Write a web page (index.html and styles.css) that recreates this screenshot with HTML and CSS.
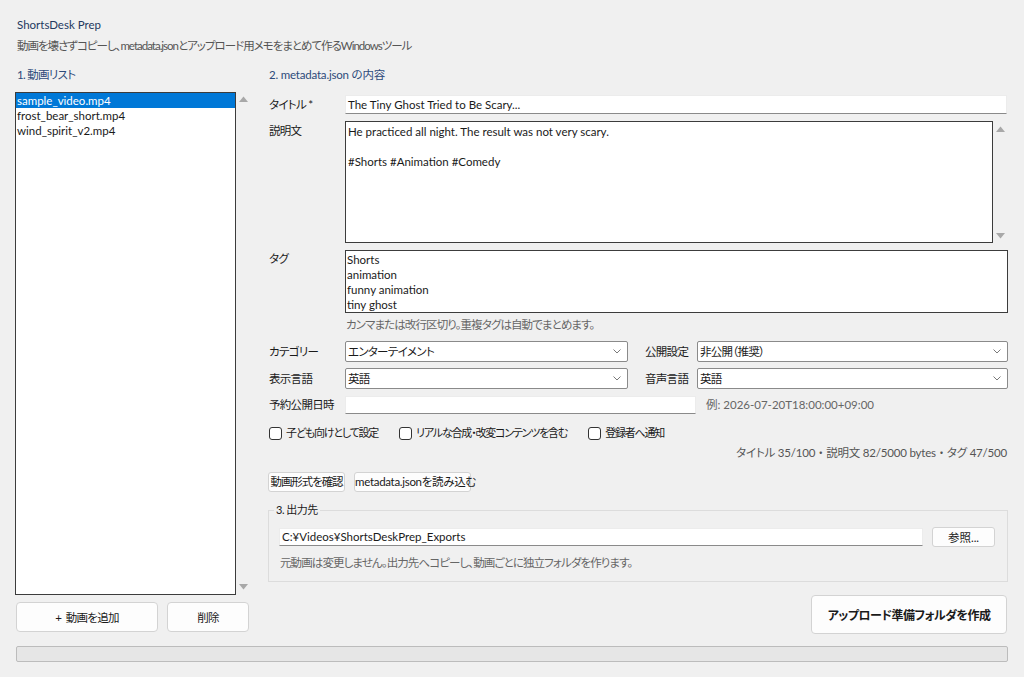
FILE: index.html
```html
<!DOCTYPE html>
<html lang="ja">
<head>
<meta charset="utf-8">
<title>ShortsDesk Prep</title>
<link rel="stylesheet" href="styles.css">
</head>
<body>
<div class="app">
  <header class="head">
    <div class="app-title">ShortsDesk Prep</div>
    <div class="app-sub jp">動画を壊さずコピーし、metadata.jsonとアップロード用メモをまとめて作るWindowsツール</div>
  </header>

  <main class="main">
    <section class="left">
      <h2 class="sec jp">1. 動画リスト</h2>
      <div class="listwrap">
        <ul class="list">
          <li class="sel">sample_video.mp4</li>
          <li>frost_bear_short.mp4</li>
          <li>wind_spirit_v2.mp4</li>
        </ul>
        <div class="vscroll">
          <svg class="arrow" width="9" height="6" viewBox="0 0 9 6"><path d="M0 6 L4.5 0.5 L9 6 Z" fill="#a8a8a8"/></svg>
          <svg class="arrow" width="9" height="6" viewBox="0 0 9 6"><path d="M0 0 L4.5 5.5 L9 0 Z" fill="#a8a8a8"/></svg>
        </div>
      </div>
      <div class="left-btns">
        <button class="btn btn-add">+&nbsp; 動画を追加</button>
        <button class="btn btn-del">削除</button>
      </div>
    </section>

    <section class="right">
      <h2 class="sec sec-meta">2. metadata.json の内容</h2>

      <div class="row row-title">
        <span class="lbl jp">タイトル *</span>
        <div class="entry entry-full">The Tiny Ghost Tried to Be Scary...</div>
      </div>

      <div class="row row-desc">
        <span class="lbl lbl-top jp">説明文</span>
        <div class="textbox desc">He practiced all night. The result was not very scary.

#Shorts #Animation #Comedy</div>
        <div class="vscroll vscroll-desc">
          <svg class="arrow" width="9" height="6" viewBox="0 0 9 6"><path d="M0 6 L4.5 0.5 L9 6 Z" fill="#a8a8a8"/></svg>
          <svg class="arrow" width="9" height="6" viewBox="0 0 9 6"><path d="M0 0 L4.5 5.5 L9 0 Z" fill="#a8a8a8"/></svg>
        </div>
      </div>

      <div class="row row-tags">
        <span class="lbl lbl-tags jp">タグ</span>
        <div class="textbox tags">Shorts
animation
funny animation
tiny ghost</div>
      </div>

      <div class="hint hint-tags jp">カンマまたは改行区切り。重複タグは自動でまとめます。</div>

      <div class="row row-combo jp">
        <span class="lbl">カテゴリー</span>
        <div class="combo combo-left"><span>エンターテイメント</span><svg class="chev" width="8" height="5" viewBox="0 0 8 5"><path d="M0.5 0.5 L4 4 L7.5 0.5" fill="none" stroke="#7a7a7a" stroke-width="1"/></svg></div>
        <span class="lbl2">公開設定</span>
        <div class="combo combo-right"><span>非公開（推奨）</span><svg class="chev" width="8" height="5" viewBox="0 0 8 5"><path d="M0.5 0.5 L4 4 L7.5 0.5" fill="none" stroke="#7a7a7a" stroke-width="1"/></svg></div>
      </div>

      <div class="row row-combo row-combo2 jp">
        <span class="lbl">表示言語</span>
        <div class="combo combo-left"><span>英語</span><svg class="chev" width="8" height="5" viewBox="0 0 8 5"><path d="M0.5 0.5 L4 4 L7.5 0.5" fill="none" stroke="#7a7a7a" stroke-width="1"/></svg></div>
        <span class="lbl2">音声言語</span>
        <div class="combo combo-right"><span>英語</span><svg class="chev" width="8" height="5" viewBox="0 0 8 5"><path d="M0.5 0.5 L4 4 L7.5 0.5" fill="none" stroke="#7a7a7a" stroke-width="1"/></svg></div>
      </div>

      <div class="row row-sched">
        <span class="lbl jp">予約公開日時</span>
        <div class="entry entry-sched"></div>
        <span class="hint hint-sched">例: 2026-07-20T18:00:00+09:00</span>
      </div>

      <div class="row row-checks">
        <label class="check"><span class="box"></span>子ども向けとして設定</label>
        <label class="check"><span class="box"></span>リアルな合成・改変コンテンツを含む</label>
        <label class="check"><span class="box"></span>登録者へ通知</label>
      </div>

      <div class="counts">タイトル 35/100 ・ 説明文 82/5000 bytes ・ タグ 47/500</div>

      <div class="row row-btns">
        <button class="btn btn-sm btn-check">動画形式を確認</button>
        <button class="btn btn-sm btn-load">metadata.jsonを読み込む</button>
      </div>

      <fieldset class="frame">
        <legend class="frame-label">3. 出力先</legend>
        <div class="row row-path">
          <div class="entry entry-path">C:¥Videos¥ShortsDeskPrep_Exports</div>
          <button class="btn btn-browse">参照...</button>
        </div>
        <div class="hint hint-path jp">元動画は変更しません。出力先へコピーし、動画ごとに独立フォルダを作ります。</div>
      </fieldset>

      <button class="btn btn-big">アップロード準備フォルダを作成</button>
    </section>
  </main>

  <div class="progress"></div>
</div>
</body>
</html>
```

FILE: styles.css
```css
* { box-sizing: border-box; }

html, body {
  margin: 0;
  padding: 0;
  background: #f0f0f0;
}

body {
  font-family: "Lato", "Noto Sans CJK JP", sans-serif;
  font-size: 11.5px;
  font-feature-settings: "palt" 1;
  color: #1a1a1a;
  width: 1024px;
  height: 677px;
  overflow: hidden;
}

/* text that is mostly Japanese */
.jp {
  font-size: 11.5px;
  letter-spacing: -0.7px;
}

.app {
  padding: 17px 16px 0 15px;
}

.head {
  padding-left: 2px;
}

.app-title {
  line-height: 16px;
  color: #23395f;
}

.app-sub {
  margin-top: 5px;
  line-height: 16px;
  color: #555555;
  letter-spacing: -1px;
}

.main {
  margin-top: 13px;
  display: grid;
  grid-template-columns: 236px 740px;
  column-gap: 17px;
}

.sec {
  margin: 0;
  font-size: 11.5px;
  font-weight: normal;
  line-height: 16px;
  color: #2d4a7a;
  padding-left: 2px;
}

.sec-meta { padding-left: 1px; letter-spacing: -0.2px; }

/* left column */
.left {
  display: flex;
  flex-direction: column;
}

.listwrap {
  margin-top: 9px;
  height: 503px;
  display: flex;
}

.list {
  list-style: none;
  margin: 0;
  padding: 0;
  width: 221px;
  height: 100%;
  background: #ffffff;
  border: 1px solid #3c3c3c;
}

.list li {
  line-height: 15px;
  height: 15px;
  padding-left: 1px;
  white-space: nowrap;
}

.list li.sel {
  background: #0078d7;
  color: #ffffff;
}

.vscroll {
  width: 15px;
  display: flex;
  flex-direction: column;
  justify-content: space-between;
  align-items: center;
  padding: 4px 0 5px;
}

.arrow { display: block; }

.left-btns {
  margin-top: 7px;
  display: flex;
  gap: 9px;
  padding-left: 1px;
}

.btn {
  font-family: "Lato", "Noto Sans CJK JP", sans-serif;
  font-size: 11.5px;
  letter-spacing: -0.7px;
  font-feature-settings: "palt" 1;
  color: #1a1a1a;
  background: #fdfdfd;
  border: 1px solid #d3d3d3;
  border-radius: 4px;
  padding: 0;
  margin: 0;
  cursor: default;
  white-space: nowrap;
}

.btn-add { width: 142px; height: 30px; }
.btn-del { width: 82px; height: 30px; }

/* right column */
.right {
  display: flex;
  flex-direction: column;
}

.row {
  display: flex;
  align-items: center;
}

.lbl {
  width: 77px;
  flex: none;
  padding-left: 1px;
  line-height: 16px;
}

.lbl-top { align-self: flex-start; padding-top: 2px; }
.lbl-tags { align-self: flex-start; padding-top: 1px; }

.entry {
  height: 19px;
  background: #ffffff;
  border: 1px solid #ececec;
  border-bottom-color: #8a8a8a;
  padding: 0 2px;
  line-height: 17px;
  white-space: nowrap;
}

.row-title { margin-top: 12px; }
.entry-full { flex: 1; margin-right: 1px; }

.row-desc { margin-top: 7px; align-items: flex-start; }

.textbox {
  background: #ffffff;
  border: 1px solid #3c3c3c;
  white-space: pre-line;
  line-height: 15px;
}

.desc {
  width: 648px;
  height: 122px;
  padding: 2px 2px;
}

.vscroll-desc {
  height: 122px;
  padding: 5px 0 4px;
}

.row-tags { margin-top: 7px; align-items: flex-start; }

.tags {
  flex: 1;
  height: 63px;
  padding: 1px 1px;
}

.hint {
  color: #666666;
  line-height: 14px;
}

.hint-tags {
  margin-top: 5px;
  padding-left: 78px;
  letter-spacing: -0.9px;
}

.row-combo { margin-top: 9px; height: 21px; }
.row-combo2 { margin-top: 6px; }

.combo {
  height: 21px;
  background: #ffffff;
  border: 1px solid #8a8a8a;
  border-radius: 2px;
  display: flex;
  align-items: center;
  justify-content: space-between;
  padding: 0 6px 0 2px;
  line-height: 19px;
}

.combo-left { width: 283px; }
.combo-right { flex: 1; }

.chev { display: block; flex: none; }

.lbl2 {
  width: 52px;
  margin-left: 17px;
  flex: none;
  line-height: 16px;
}

.row-sched { margin-top: 7px; height: 18px; }
.entry-sched { width: 351px; height: 18px; }
.hint-sched { margin-left: 10px; }

.row-checks {
  margin-top: 12px;
  height: 14px;
  padding-left: 1px;
  gap: 21px;
  font-size: 11px;
  letter-spacing: -1.2px;
}

.check {
  display: flex;
  align-items: center;
  line-height: 14px;
  white-space: nowrap;
}

.box {
  width: 13px;
  height: 13px;
  border: 1px solid #333333;
  border-radius: 3px;
  background: #ffffff;
  margin-right: 4px;
  flex: none;
}

.counts {
  margin-top: 6px;
  line-height: 14px;
  text-align: right;
  color: #555555;
  padding-right: 1px;
  letter-spacing: -0.2px;
}

.row-btns {
  margin-top: 12px;
  gap: 9px;
}

.btn-sm {
  height: 20px;
  border-radius: 3px;
  line-height: 18px;
}

.btn-check { width: 77px; letter-spacing: -1.1px; }
.btn-load { width: 117px; letter-spacing: -0.3px; }

.frame {
  margin: 11px 0 0 0;
  padding: 0 12px 11px 10px;
  border: 1px solid #dcdcdc;
  min-width: 0;
}

.frame-label {
  font-size: 11px;
  letter-spacing: -0.5px;
  line-height: 14px;
  padding: 0 2px;
  margin-left: -5px;
  color: #1a1a1a;
}

.row-path { margin-top: 10px; }

.entry-path { flex: 1; height: 18px; line-height: 16px; }

.btn-browse {
  width: 63px;
  height: 20px;
  margin-left: 9px;
  border-radius: 3px;
  letter-spacing: 0;
}

.hint-path {
  margin-top: 9px;
  padding-left: 1px;
  letter-spacing: -0.9px;
}

.btn-big {
  margin-top: 13px;
  align-self: flex-end;
  width: 196px;
  height: 39px;
  font-weight: bold;
  font-size: 12px;
  letter-spacing: -0.5px;
  margin-right: 1px;
}

.progress {
  margin-top: 12px;
  margin-left: 1px;
  height: 16px;
  border: 1px solid #bcbcbc;
  border-radius: 2px;
  background: #e6e6e6;
}
```
